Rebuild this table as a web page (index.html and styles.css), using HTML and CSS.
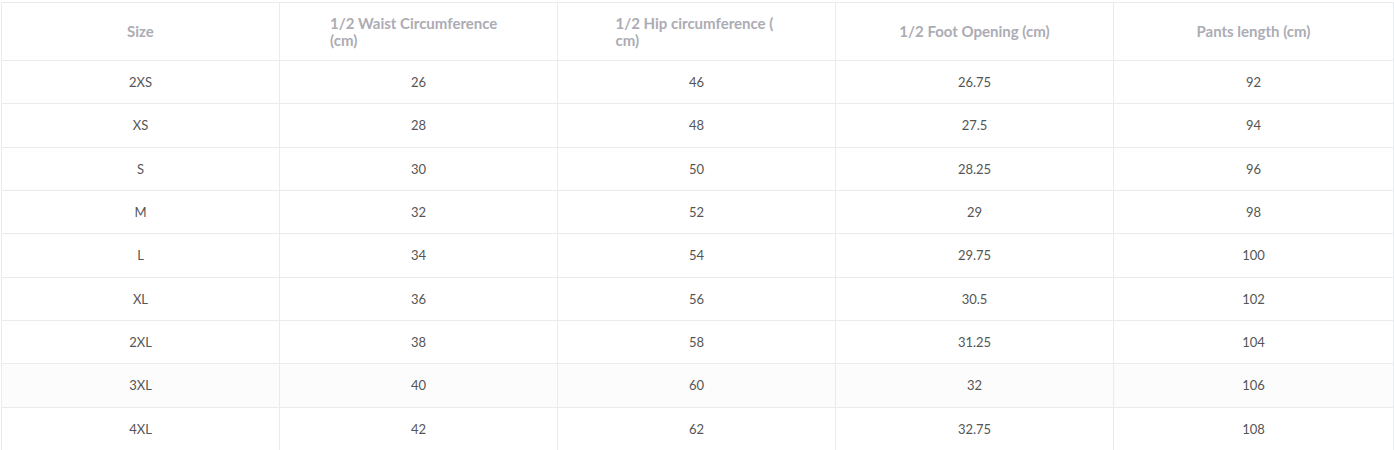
FILE: index.html
```html
<!DOCTYPE html>
<html>
<head>
<meta charset="utf-8">
<link rel="stylesheet" href="styles.css">
</head>
<body>
<div class="wrap">
<table class="size-table">
  <colgroup>
    <col class="c-std"><col class="c-std"><col class="c-std"><col class="c-std"><col class="c-last">
  </colgroup>
  <thead>
    <tr>
      <th><span class="hd">Size</span></th>
      <th><span class="hd hd-waist">1/2 Waist Circumference (cm)</span></th>
      <th><span class="hd hd-hip">1/2 Hip circumference ( cm)</span></th>
      <th><span class="hd">1/2 Foot Opening (cm)</span></th>
      <th><span class="hd">Pants length (cm)</span></th>
    </tr>
  </thead>
  <tbody>
    <tr><td>2XS</td><td>26</td><td>46</td><td>26.75</td><td>92</td></tr>
    <tr><td>XS</td><td>28</td><td>48</td><td>27.5</td><td>94</td></tr>
    <tr><td>S</td><td>30</td><td>50</td><td>28.25</td><td>96</td></tr>
    <tr><td>M</td><td>32</td><td>52</td><td>29</td><td>98</td></tr>
    <tr><td>L</td><td>34</td><td>54</td><td>29.75</td><td>100</td></tr>
    <tr><td>XL</td><td>36</td><td>56</td><td>30.5</td><td>102</td></tr>
    <tr><td>2XL</td><td>38</td><td>58</td><td>31.25</td><td>104</td></tr>
    <tr class="shade"><td>3XL</td><td>40</td><td>60</td><td>32</td><td>106</td></tr>
    <tr><td>4XL</td><td>42</td><td>62</td><td>32.75</td><td>108</td></tr>
  </tbody>
</table>
</div>
</body>
</html>
```

FILE: styles.css
```css
html, body {
  margin: 0;
  padding: 0;
  background: #fff;
}
body {
  font-family: Lato, "Liberation Sans", sans-serif;
  overflow: hidden;
}
.wrap {
  padding: 2px 0 0 1px;
}
.size-table {
  width: 1392px;
  border-collapse: collapse;
  table-layout: fixed;
}
.c-std {
  width: 278px;
}
.c-last {
  width: 280px;
}
.size-table th,
.size-table td {
  border: 1px solid #e9ecef;
  text-align: center;
  vertical-align: middle;
}
.size-table th {
  height: 57px;
  padding: 0 50px;
  font-size: 15px;
  font-weight: 700;
  color: #acacb4;
  line-height: 17px;
}
.hd {
  display: inline-block;
  text-align: left;
}
.hd-hip {
  max-width: 162px;
}
.size-table td {
  height: 42.33px;
  padding: 0;
  font-size: 13px;
  color: #555;
  line-height: 20px;
}
.size-table tr.shade td {
  background: #fcfcfc;
}
```
